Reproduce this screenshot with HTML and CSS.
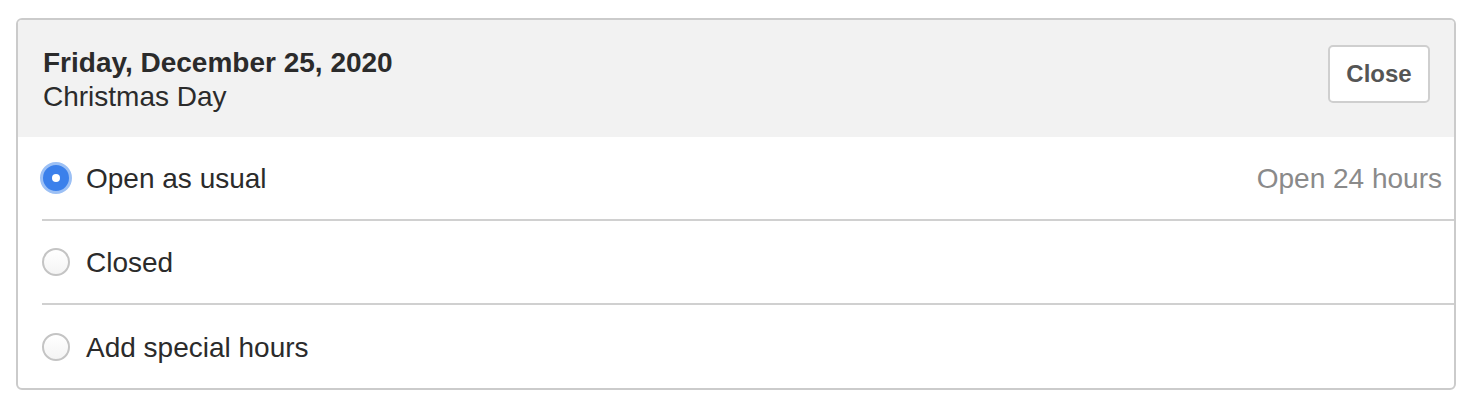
FILE: index.html
```html
<!DOCTYPE html>
<html>
<head>
<meta charset="utf-8">
<link rel="stylesheet" href="styles.css">
</head>
<body>
<div class="card">
  <div class="header">
    <div class="titles">
      <div class="title">Friday, December 25, 2020</div>
      <div class="subtitle">Christmas Day</div>
    </div>
    <button class="close">Close</button>
  </div>
  <div class="options">
    <label class="option">
      <span class="radio checked"></span>
      <span class="label">Open as usual</span>
      <span class="meta">Open 24 hours</span>
    </label>
    <label class="option">
      <span class="radio"></span>
      <span class="label">Closed</span>
    </label>
    <label class="option last">
      <span class="radio"></span>
      <span class="label">Add special hours</span>
    </label>
  </div>
</div>
</body>
</html>
```
FILE: styles.css
```css
* { box-sizing: border-box; }
html, body { margin: 0; padding: 0; background: #fff; }
body {
  font-family: "Liberation Sans", Arial, Helvetica, sans-serif;
  color: #2b2b2b;
  padding: 18px 16px 0 16px;
}
.card {
  width: 1440px;
  height: 372px;
  border: 2px solid #cbcbcb;
  border-radius: 6px;
  overflow: hidden;
}
.header {
  background: #f2f2f2;
  height: 117px;
  display: flex;
  justify-content: space-between;
  align-items: flex-start;
  padding: 26px 24px 0 25px;
}
.title {
  font-weight: bold;
  font-size: 28px;
  line-height: 34px;
}
.subtitle {
  font-size: 28px;
  line-height: 34px;
}
.close {
  margin-top: -1px;
  width: 102px;
  height: 58px;
  background: #fff;
  border: 2px solid #cfcfcf;
  border-radius: 5px;
  font-family: inherit;
  font-weight: bold;
  font-size: 24px;
  color: #555;
  padding: 0;
}
.options {
  padding-left: 24px;
}
.option {
  display: flex;
  align-items: center;
  height: 84px;
  border-bottom: 2px solid #d0d0d0;
  padding-right: 12px;
}
.option.last { border-bottom: none; }
.label, .meta { padding-top: 2px; }
.radio {
  width: 28px;
  height: 28px;
  border-radius: 50%;
  border: 2px solid #c4c4c4;
  background: linear-gradient(#fff, #f4f4f4);
  flex: none;
  margin-left: 0;
  margin-right: 16px;
}
.radio.checked {
  width: 32px;
  height: 32px;
  margin-left: -2px;
  margin-right: 14px;
  border: 3px solid #9cc0f5;
  background: #3b80eb;
  position: relative;
}
.radio.checked::after {
  content: "";
  position: absolute;
  left: 50%;
  top: 50%;
  width: 8px;
  height: 8px;
  margin: -4px 0 0 -4px;
  border-radius: 50%;
  background: #fff;
}
.label {
  font-size: 28px;
  color: #2b2b2b;
  flex: 1;
}
.meta {
  font-size: 28px;
  color: #8a8a8a;
}
```
